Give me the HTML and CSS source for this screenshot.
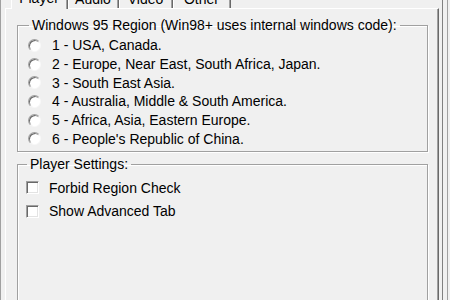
FILE: index.html
```html
<!DOCTYPE html>
<html lang="en">
<head>
    <meta charset="UTF-8">
    <title>Player Settings</title>
    <link rel="stylesheet" href="styles.css">
</head>
<body>
    <div class="window">
        <div class="main">
            <div class="tabstrip">
                <div class="tab tab-player active">Player</div>
                <div class="tab tab-audio">Audio</div>
                <div class="tab tab-video">Video</div>
                <div class="tab tab-other">Other</div>
            </div>
            <div class="page">
                <fieldset class="group regions">
                    <legend>Windows 95 Region (Win98+ uses internal windows code):</legend>
                    <label class="radio-row"><span class="radio"></span>1 - USA, Canada.</label>
                    <label class="radio-row"><span class="radio"></span>2 - Europe, Near East, South Africa, Japan.</label>
                    <label class="radio-row"><span class="radio"></span>3 - South East Asia.</label>
                    <label class="radio-row"><span class="radio"></span>4 - Australia, Middle &amp; South America.</label>
                    <label class="radio-row"><span class="radio"></span>5 - Africa, Asia, Eastern Europe.</label>
                    <label class="radio-row"><span class="radio"></span>6 - People's Republic of China.</label>
                </fieldset>
                <fieldset class="group settings">
                    <legend>Player Settings:</legend>
                    <label class="check-row"><span class="check"></span>Forbid Region Check</label>
                    <label class="check-row"><span class="check"></span>Show Advanced Tab</label>
                </fieldset>
            </div>
        </div>
        <div class="rail"></div>
    </div>
</body>
</html>
```

FILE: styles.css
```css
body {
    margin: 0;
    background-color: #f0f0f0;
    font-family: "Liberation Sans", Arial, sans-serif;
    font-size: 14px;
    color: #000;
    overflow: hidden;
    height: 300px;
}
.window {
    display: flex;
    margin-top: -12px;
    height: 312px;
    border-left: 1px solid #a0a0a0;
    padding-left: 4px;
}
.main {
    width: 434px;
    display: flex;
    flex-direction: column;
}
.rail {
    margin-left: 3px;
    width: 4px;
    border-left: 1px solid #808080;
    border-right: 1px solid #a0a0a0;
}

/* tabs */
.tabstrip {
    display: flex;
    height: 22px;
    padding-left: 6px;
    align-items: flex-end;
}
.tab {
    box-sizing: border-box;
    height: 18px;
    line-height: 19px;
    text-align: center;
    border-left: 1px solid #fff;
    border-right: 1px solid #a0a0a0;
    box-shadow: 1px 0 0 #696969;
    margin-right: 1px;
}
.tab.active {
    height: 21px;
    margin-bottom: -1px;
    line-height: 20px;
    background-color: #f0f0f0;
    position: relative;
}
.tab-player { width: 56px; }
.tab-audio { width: 50px; }
.tab-video { width: 53px; }
.tab-other { width: 57px; }

/* page */
.page {
    flex: 1;
    border-top: 1px solid #fff;
    border-left: 1px solid #fff;
    border-right: 1px solid #696969;
    box-shadow: inset -1px 0 0 #a0a0a0;
    padding: 8px 10px 0 11px;
}
.group {
    margin: 0;
    padding: 0 0 0 10px;
    border: 1px solid #a0a0a0;
    box-shadow: 1px 1px 0 #fff, inset 1px 1px 0 #fff;
    min-inline-size: 0;
}
.group legend {
    padding: 0 3px;
    margin-left: 1px;
    line-height: 16px;
}
.regions {
    padding-top: 3px;
    padding-bottom: 3px;
}
.settings {
    margin-top: 4px;
    height: 200px;
    padding-left: 8px;
    padding-top: 4px;
}

.radio-row, .check-row {
    display: flex;
    align-items: center;
}
.radio-row {
    height: 18.7px;
}
.check-row {
    height: 23.5px;
}
.radio {
    width: 11px;
    height: 11px;
    border: 1px solid;
    border-color: #a0a0a0 #f8f8f8 #f8f8f8 #a0a0a0;
    border-radius: 50%;
    background-color: #fff;
    box-shadow: inset 1px 1px 0 #696969;
    margin-right: 11px;
}
.check {
    width: 11px;
    height: 11px;
    border: 1px solid;
    border-color: #a0a0a0 #fff #fff #a0a0a0;
    background-color: #fff;
    box-shadow: inset 1px 1px 0 #696969, inset -1px -1px 0 #e3e3e3;
    margin-right: 10px;
}
```
